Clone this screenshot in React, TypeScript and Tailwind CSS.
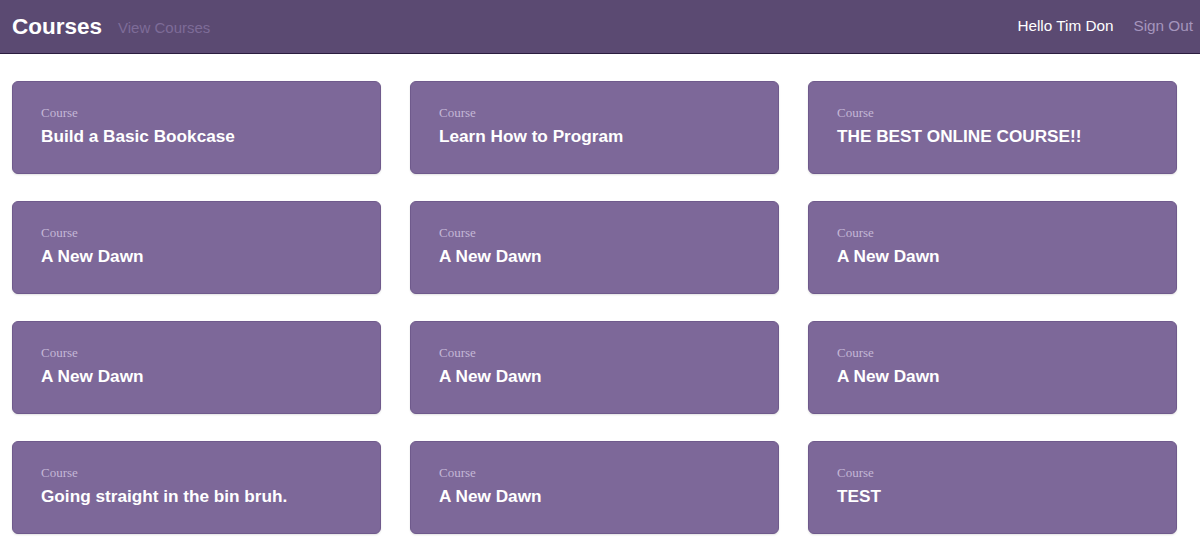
import React from 'react';

const courses = [
  'Build a Basic Bookcase',
  'Learn How to Program',
  'THE BEST ONLINE COURSE!!',
  'A New Dawn',
  'A New Dawn',
  'A New Dawn',
  'A New Dawn',
  'A New Dawn',
  'A New Dawn',
  'Going straight in the bin bruh.',
  'A New Dawn',
  'TEST',
];

function CourseCard({ title }: { title: string }) {
  return (
    <div className="h-[93px] rounded-[6px] border border-[#6f5a8c] bg-[#7d6899] px-[28px] pt-[22px] shadow-[0_1px_2px_rgba(0,0,0,0.12)]">
      <p className="text-[13px] leading-[18px] text-[#c4b7d6] [font-family:'Liberation_Serif',serif]">Course</p>
      <h3 className="mt-[3px] text-[17.2px] font-bold leading-[23px] text-white [font-family:'Liberation_Sans',Arial,sans-serif]">
        {title}
      </h3>
    </div>
  );
}

export default function App() {
  return (
    <div className="min-h-screen bg-white [font-family:'Liberation_Sans',Arial,sans-serif]">
      <header className="flex h-[54px] items-center justify-between border-b border-[#2b1d40] bg-[#5b4a72] pl-[12px] pr-[7px]">
        <div className="flex items-center gap-[16px]">
          <h1 className="text-[22.5px] font-bold text-white">Courses</h1>
          <a className="pt-[3px] text-[15px] text-[#7e6c98]">View Courses</a>
        </div>
        <nav className="flex items-center gap-[20px] text-[15.3px]">
          <span className="text-white">Hello Tim Don</span>
          <a className="text-[#a595bd]">Sign Out</a>
        </nav>
      </header>
      <main className="grid grid-cols-3 gap-x-[29px] gap-y-[27px] pl-[12px] pr-[23px] pt-[27px]">
        {courses.map((c, i) => (
          <CourseCard key={i} title={c} />
        ))}
      </main>
    </div>
  );
}
